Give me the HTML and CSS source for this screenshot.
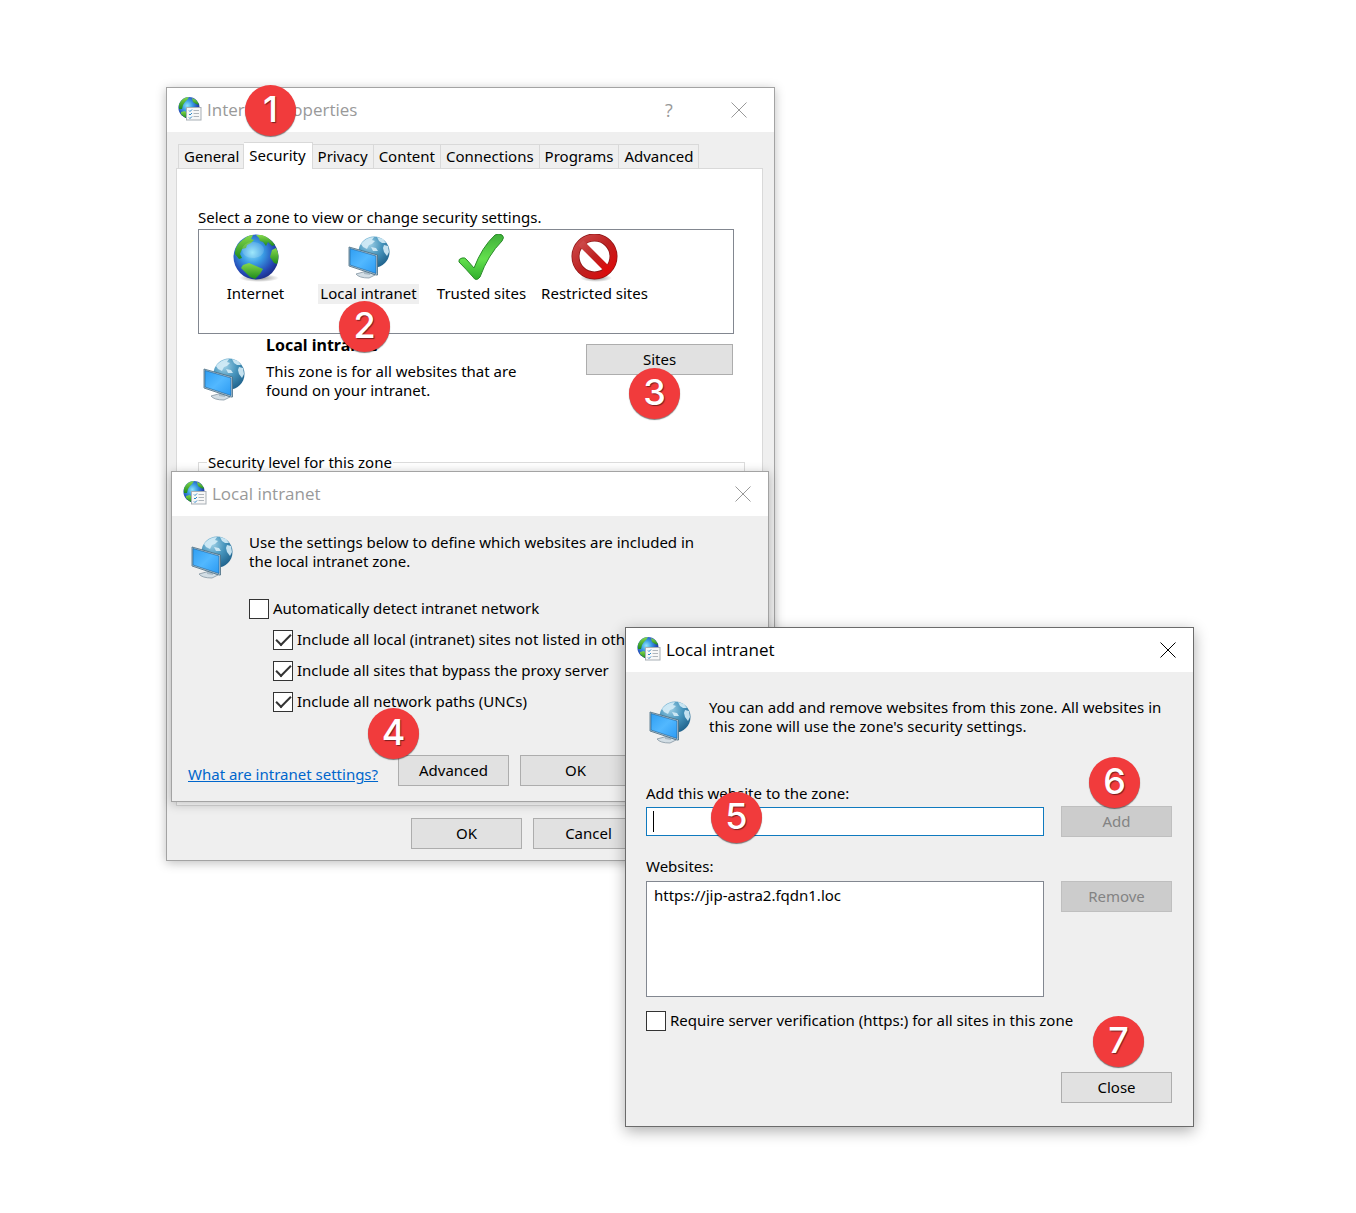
FILE: index.html
```html
<!DOCTYPE html>
<html lang="en">
<head>
    <meta charset="UTF-8">
    <meta name="viewport" content="width=device-width, initial-scale=1.0">
    <link rel="stylesheet" href="styles.css">
    <title>Internet Properties</title>
</head>
<body>

    <!-- Shared icons -->
    <svg class="sprite" width="0" height="0" aria-hidden="true">
        <defs>
            <radialGradient id="ocean" cx="42%" cy="40%" r="62%">
                <stop offset="0" stop-color="#8ee4fa"/>
                <stop offset="0.4" stop-color="#3a9be4"/>
                <stop offset="0.8" stop-color="#2448b4"/>
                <stop offset="1" stop-color="#1c2f8c"/>
            </radialGradient>
            <linearGradient id="land" x1="0" y1="0" x2="0" y2="1">
                <stop offset="0" stop-color="#86d94c"/>
                <stop offset="1" stop-color="#1c8a1c"/>
            </linearGradient>
            <radialGradient id="pale" cx="35%" cy="25%" r="80%">
                <stop offset="0" stop-color="#9fd0e6"/>
                <stop offset="0.5" stop-color="#4795bd"/>
                <stop offset="1" stop-color="#1f628c"/>
            </radialGradient>
            <linearGradient id="screen" x1="0" y1="0" x2="1" y2="1">
                <stop offset="0" stop-color="#2f9ef2"/>
                <stop offset="0.5" stop-color="#52b8ff"/>
                <stop offset="1" stop-color="#2b9af3"/>
            </linearGradient>
            <linearGradient id="tick" x1="0" y1="0" x2="0" y2="1">
                <stop offset="0" stop-color="#3fae3a"/>
                <stop offset="0.55" stop-color="#63e04d"/>
                <stop offset="1" stop-color="#2fae2c"/>
            </linearGradient>
            <linearGradient id="stop" x1="0" y1="0" x2="1" y2="1">
                <stop offset="0" stop-color="#cc4a4a"/>
                <stop offset="0.5" stop-color="#bd2222"/>
                <stop offset="1" stop-color="#e00808"/>
            </linearGradient>
            <radialGradient id="shade">
                <stop offset="0" stop-color="#555" stop-opacity="0.7"/>
                <stop offset="1" stop-color="#555" stop-opacity="0"/>
            </radialGradient>
        </defs>
        <symbol id="globe" viewBox="0 0 48 48">
            <ellipse cx="27" cy="44" rx="20" ry="4" fill="url(#shade)"/>
            <circle cx="24" cy="23" r="22.500" fill="url(#ocean)"/>
            <g fill="url(#land)">
                <path d="M12 5C15 2 18 1 21 1L19 5L22 6L19 9L15 11L14 14L10 15L8 20L10 24L7 25L3 20C3 13 7 8 12 5Z"/>
                <path d="M24 1L30 1C36 3 40 7 43 11L40 12L36 8L34 12L31 8L28 7L27 4Z"/>
                <path d="M40 16L44 14C47 19 47 25 45 30L42 29L38 23Z"/>
                <path d="M11 31L17 29L24 32L31 35L28 40L23 45L18 43L13 38L9 34Z"/>
            </g>
            <ellipse cx="21" cy="16" rx="11" ry="8" fill="#fff" opacity="0.15"/>
        </symbol>
        <symbol id="intranet" viewBox="0 0 48 48">
            <circle cx="29" cy="18" r="15.500" fill="url(#pale)"/>
            <g fill="#d5edf8" opacity="0.9">
                <path d="M16 10C19 6 24 3 29 3L27 6L30 7L27 10L24 11L22 15L18 13Z"/>
                <path d="M32 3L38 5L41 9L37 9L34 7Z"/>
                <path d="M39 11L43 12L44 18L42 22L39 18L38 14Z"/>
                <path d="M26 13L31 14L33 17L28 17Z"/>
            </g>
            <path d="M11 40L22 37L30 41L24 44Q14 44 11 40Z" fill="#d3dee5" stroke="#8495a2" stroke-width="0.800"/>
            <path d="M19 36L25 37L25 41L19 40Z" fill="#a9bac5"/>
            <path d="M4 13L32.500 21L32.500 41L31 41L4 32Z" fill="#b9cbd6" stroke="#456b82" stroke-width="0.800"/>
            <path d="M5 14.500L31 22L31 39.500L5 31Z" fill="url(#screen)" stroke="#1d5f96" stroke-width="0.600"/>
        </symbol>
        <symbol id="trusted" viewBox="0 0 48 48">
            <path d="M1 28Q0 25 4 24Q7 23 9 26L16 34Q24 13 37 1Q41-1 44 1Q47 3 44 7Q30 21 22 43Q18 48 15 43Q8 35 1 28Z" fill="url(#tick)" stroke="#2a8a2a" stroke-width="1"/>
        </symbol>
        <symbol id="restricted" viewBox="0 0 48 48">
            <ellipse cx="25" cy="44" rx="16" ry="4" fill="url(#shade)"/>
            <circle cx="23.500" cy="22.500" r="19" fill="none" stroke="#8d1414" stroke-width="8"/>
            <circle cx="23.500" cy="22.500" r="19" fill="none" stroke="url(#stop)" stroke-width="6.500"/>
            <path d="M10 9L37 36" stroke="url(#stop)" stroke-width="7"/>
        </symbol>
        <symbol id="options" viewBox="0 0 24 24">
            <circle cx="11" cy="10.700" r="10.600" fill="url(#ocean)"/>
            <g fill="url(#land)">
                <path d="M5 2Q8 0 11 0L9 3L7 5L5 8L4 12L1 12Q0 6 5 2Z"/>
                <path d="M14 1Q20 3 21 8L18 7L15 5Z"/>
                <path d="M3 15L7 14L10 18L9 21Q5 20 3 17Z"/>
            </g>
            <rect x="8.500" y="10.500" width="14.500" height="12.500" fill="#f7f7f7" stroke="#a8afb5"/>
            <path d="M11 13.500L12 14.500L14 12.500M11 17L12 18L14 16M11 20.500L12 21.500L14 19.500" fill="none" stroke="#2b86c8"/>
            <path d="M15.500 13.500H21M15.500 16.500H21M15.500 19.500H21" stroke="#b0b6bc"/>
        </symbol>
        <symbol id="cross" viewBox="0 0 16 16">
            <path d="M0.500 0.500L15.500 15.500M15.500 0.500L0.500 15.500" fill="none" stroke="currentColor"/>
        </symbol>
    </svg>

    <div class="desktop">

        <!-- Internet Properties -->
        <section class="window inactive properties">
            <header class="title-bar">
                <svg class="title-icon"><use href="#options"/></svg>
                <h1 class="title">Internet Properties</h1>
                <button class="title-button" aria-label="Help">?</button>
                <button class="title-button" aria-label="Close"><svg class="cross"><use href="#cross"/></svg></button>
            </header>
            <nav class="tabs">
                <button class="tab">General</button>
                <button class="tab selected">Security</button>
                <button class="tab">Privacy</button>
                <button class="tab">Content</button>
                <button class="tab">Connections</button>
                <button class="tab">Programs</button>
                <button class="tab">Advanced</button>
            </nav>
            <div class="tab-panel">
                <p>Select a zone to view or change security settings.</p>
                <div class="zones">
                    <button class="zone"><svg class="icon"><use href="#globe"/></svg><span class="zone-name">Internet</span></button>
                    <button class="zone selected"><svg class="icon"><use href="#intranet"/></svg><span class="zone-name">Local intranet</span></button>
                    <button class="zone"><svg class="icon"><use href="#trusted"/></svg><span class="zone-name">Trusted sites</span></button>
                    <button class="zone"><svg class="icon"><use href="#restricted"/></svg><span class="zone-name">Restricted sites</span></button>
                </div>
                <div class="zone-info">
                    <svg class="icon"><use href="#intranet"/></svg>
                    <div class="zone-text">
                        <h2 class="zone-title">Local intranet</h2>
                        <p>This zone is for all websites that are found on your intranet.</p>
                    </div>
                    <button class="button wide">Sites</button>
                </div>
                <fieldset class="level">
                    <legend>Security level for this zone</legend>
                </fieldset>
            </div>
            <footer class="buttons">
                <button class="button">OK</button>
                <button class="button">Cancel</button>
            </footer>
        </section>

        <!-- Local intranet settings -->
        <section class="window inactive intranet">
            <header class="title-bar">
                <svg class="title-icon"><use href="#options"/></svg>
                <h1 class="title">Local intranet</h1>
                <button class="title-button" aria-label="Close"><svg class="cross"><use href="#cross"/></svg></button>
            </header>
            <div class="intro">
                <svg class="icon"><use href="#intranet"/></svg>
                <p class="intro-text">Use the settings below to define which websites are included in the local intranet zone.</p>
            </div>
            <div class="checks">
                <label class="check"><input type="checkbox">Automatically detect intranet network</label>
                <label class="check nested"><input type="checkbox" checked>Include all local (intranet) sites not listed in other zones</label>
                <label class="check nested"><input type="checkbox" checked>Include all sites that bypass the proxy server</label>
                <label class="check nested"><input type="checkbox" checked>Include all network paths (UNCs)</label>
            </div>
            <footer class="buttons">
                <a class="help-link" href="#">What are intranet settings?</a>
                <button class="button">Advanced</button>
                <button class="button">OK</button>
            </footer>
        </section>

        <!-- Websites of the zone -->
        <section class="window sites">
            <header class="title-bar">
                <svg class="title-icon"><use href="#options"/></svg>
                <h1 class="title">Local intranet</h1>
                <button class="title-button" aria-label="Close"><svg class="cross"><use href="#cross"/></svg></button>
            </header>
            <div class="intro">
                <svg class="icon"><use href="#intranet"/></svg>
                <p class="intro-text">You can add and remove websites from this zone. All websites in this zone will use the zone's security settings.</p>
            </div>
            <div class="site-form">
                <label for="website">Add this website to the zone:</label>
                <div class="field"><span class="caret"></span><input id="website" type="text"></div>
                <button class="button" disabled>Add</button>
                <label class="list-label" for="websites">Websites:</label>
                <select id="websites" class="site-list" size="5">
                    <option>https://jip-astra2.fqdn1.loc</option>
                </select>
                <button class="button" disabled>Remove</button>
            </div>
            <label class="check verify"><input type="checkbox">Require server verification (https:) for all sites in this zone</label>
            <footer class="buttons">
                <button class="button">Close</button>
            </footer>
        </section>

        <!-- Step numbers -->
        <span class="step step-1">1</span>
        <span class="step step-2">2</span>
        <span class="step step-3">3</span>
        <span class="step step-4">4</span>
        <span class="step step-5">5</span>
        <span class="step step-6">6</span>
        <span class="step step-7">7</span>
    </div>

</body>
</html>
```

FILE: styles.css
```css
* {
    box-sizing: border-box;
}

body {
    margin: 0;
    background-color: #fff;
    color: #000;
    font: 15px/19px "Noto Sans", Tahoma, sans-serif;
}

h1, h2, p {
    margin: 0;
}

button, input, select {
    font: inherit;
    color: inherit;
}

.sprite {
    position: absolute;
}

.desktop {
    position: relative;
    min-height: 100vh;
}

/* Windows */
.window {
    position: absolute;
    display: flex;
    flex-direction: column;
    border: 1px solid #6b6b6b;
    background-color: #efefef;
    box-shadow: 0 4px 14px rgba(0, 0, 0, 0.32);
}

.window.inactive {
    border-color: #a3a3a3;
    box-shadow: 0 2px 10px rgba(0, 0, 0, 0.26);
}

.properties {
    left: 166px;
    top: 87px;
    width: 609px;
}

.intranet {
    left: 171px;
    top: 471px;
    width: 598px;
}

.sites {
    left: 625px;
    top: 627px;
    width: 569px;
}

.title-bar {
    display: flex;
    align-items: center;
    height: 44px;
    padding-left: 11px;
    background-color: #fff;
}

.properties .title-bar {
    padding-right: 10px;
}

.title-icon {
    width: 24px;
    height: 24px;
    margin: 0 5px 2px 0;
}

.title {
    flex: 1;
    font: 17px/24px "Open Sans", "Segoe UI", sans-serif;
}

.title-button {
    display: flex;
    align-items: center;
    justify-content: center;
    width: 70px;
    height: 44px;
    padding: 0;
    border: 0;
    background: none;
    font: 18px/24px "Open Sans", "Segoe UI", sans-serif;
}

.title-button:last-child {
    width: 50px;
    margin-left: 10px;
}

.inactive .title, .inactive .title-button {
    color: #999;
}

.cross {
    width: 16px;
    height: 16px;
}

.icon {
    flex: none;
    width: 48px;
    height: 48px;
}

/* Buttons */
.button {
    width: 111px;
    height: 31px;
    padding: 0;
    border: 1px solid #adadad;
    background-color: #e1e1e1;
}

.button.wide {
    width: 147px;
}

.button:disabled {
    border-color: #bfbfbf;
    background-color: #ccc;
    color: #838383;
}

.buttons {
    display: flex;
    gap: 11px;
}

/* Tabs */
.tabs {
    display: flex;
    align-items: flex-end;
    height: 37px;
    padding-left: 11px;
}

.tab {
    height: 25px;
    padding: 0 5px;
    border: 1px solid #d9d9d9;
    border-left: 0;
    background-color: #efefef;
}

.tab:first-child {
    padding-right: 4px;
    border-left: 1px solid #d9d9d9;
}

.tab.selected {
    position: relative;
    height: 27px;
    padding: 0 6px 2px 5px;
    border-bottom: 0;
    background-color: #fff;
}

.tab-panel {
    height: 638px;
    margin: -1px 11px 0 9px;
    padding: 39px 17px 0 21px;
    border: 1px solid #d9d9d9;
    background-color: #fff;
}

.zones {
    display: flex;
    width: 536px;
    height: 105px;
    margin-top: 2px;
    padding: 4px 0;
    border: 1px solid #828790;
}

.zone {
    display: flex;
    flex-direction: column;
    align-items: center;
    width: 113px;
    padding: 0;
    border: 0;
    background: none;
}

.zone-name {
    margin-top: 2px;
    padding: 0 2px 2px;
    line-height: 18px;
    white-space: nowrap;
}

.zone.selected .zone-name {
    background-color: #efefef;
}

.zone-info {
    display: flex;
    width: 535px;
    margin-top: 2px;
}

.zone-info .icon {
    margin: 20px 18px 0 2px;
}

.zone-text {
    width: 270px;
}

.zone-title {
    margin-bottom: 7px;
    font-size: 16px;
    line-height: 19px;
}

.zone-info .button {
    margin: 8px 0 0 auto;
}

.level {
    height: 300px;
    margin: 49px 0 0;
    padding: 0 8px;
    border: 1px solid #dcdcdc;
}

.level legend {
    padding: 0 1px;
}

.properties .buttons {
    padding: 12px 0 11px 244px;
}

/* Intro text with its icon */
.intro {
    display: flex;
    gap: 13px;
    padding: 17px 0 0 16px;
}

.intro .icon {
    margin-top: 1px;
}

.intro-text {
    width: 464px;
}

/* Check boxes */
.check {
    display: flex;
    align-items: flex-start;
    gap: 4px;
    white-space: nowrap;
}

.check input {
    appearance: none;
    display: grid;
    place-items: center;
    width: 20px;
    height: 20px;
    margin: 0;
    border: 1px solid #333;
    background-color: #fff;
}

.check input:checked::after {
    content: "";
    width: 13px;
    height: 6px;
    margin-bottom: 4px;
    border: solid #333;
    border-width: 0 0 2px 2px;
    transform: rotate(-45deg);
}

.checks {
    display: grid;
    gap: 11px;
    padding: 17px 0 0 77px;
}

.nested {
    margin-left: 24px;
}

.intranet .buttons {
    padding: 43px 0 15px 16px;
}

.help-link {
    width: 199px;
    padding-top: 10px;
    color: #0066cc;
}

/* Website list */
.sites .intro {
    gap: 15px;
    padding: 26px 0 0 20px;
}

.site-form {
    display: grid;
    grid-template-columns: 1fr 111px;
    column-gap: 17px;
    padding: 37px 21px 0 20px;
}

.site-form label {
    grid-column: 1 / 3;
    margin-bottom: 3px;
}

.site-form .list-label {
    margin-top: 20px;
    margin-bottom: 5px;
}

.field {
    display: flex;
    align-items: center;
    height: 29px;
    margin-top: 1px;
    padding-left: 6px;
    border: 1px solid #0f7abf;
    background-color: #fff;
}

.field input {
    flex: 1;
    min-width: 0;
    border: 0;
    outline: 0;
    background: none;
}

.caret {
    width: 1px;
    height: 21px;
    background-color: #000;
}

.site-list {
    height: 116px;
    padding: 3px 5px;
    border: 1px solid #828790;
    border-radius: 0;
    outline: 0;
    background-color: #fff;
    overflow: hidden;
}

.site-list option {
    min-height: 19px;
    padding: 0 2px;
}

.verify {
    margin: 14px 0 0 20px;
}

.sites .buttons {
    justify-content: flex-end;
    padding: 41px 21px 23px 0;
}

/* Step numbers */
.step {
    position: absolute;
    width: 51px;
    height: 51px;
    border-radius: 50%;
    background-color: #f13b3c;
    box-shadow: 0 1px 1px rgba(0, 0, 0, 0.5);
    color: #fff;
    font: 500 36px/48px Inter, sans-serif;
    text-align: center;
    text-shadow: 1px 1px 1px rgba(0, 0, 0, 0.5);
}

.step-1 {
    left: 245px;
    top: 85px;
}

.step-2 {
    left: 339px;
    top: 301px;
}

.step-3 {
    left: 629px;
    top: 368px;
}

.step-4 {
    left: 368px;
    top: 708px;
}

.step-5 {
    left: 711px;
    top: 792px;
}

.step-6 {
    left: 1089px;
    top: 757px;
}

.step-7 {
    left: 1093px;
    top: 1016px;
}
```
